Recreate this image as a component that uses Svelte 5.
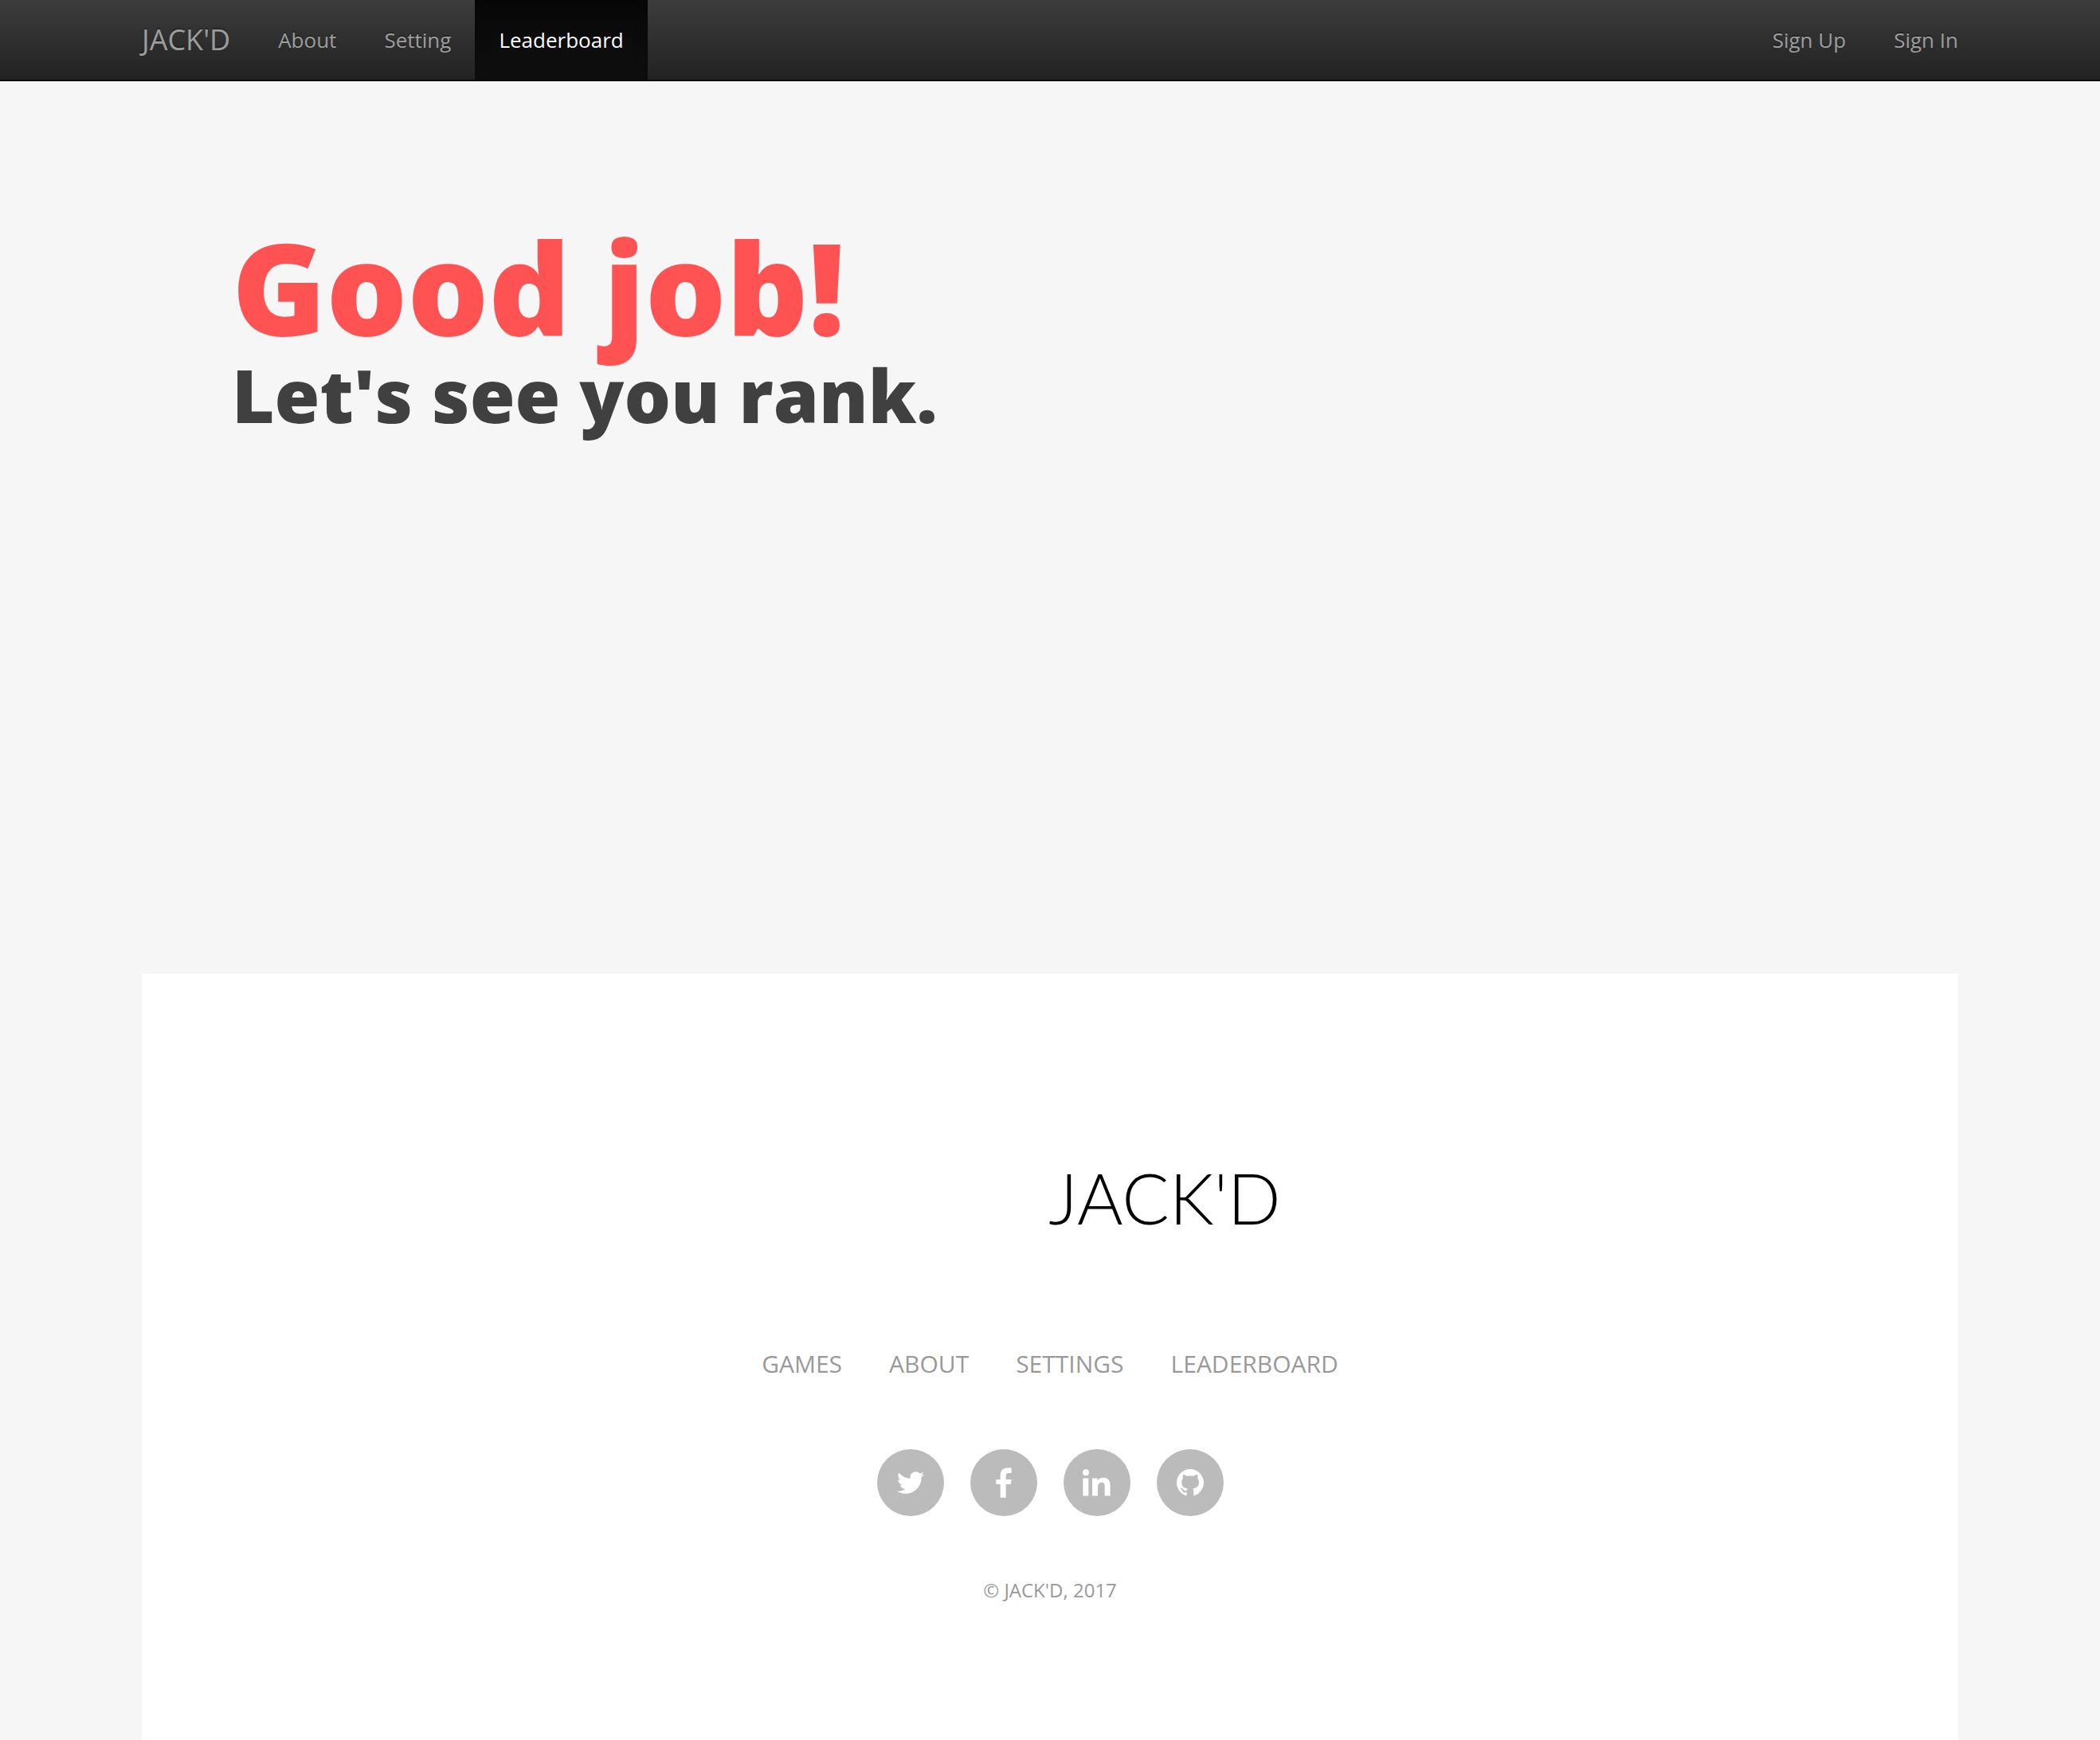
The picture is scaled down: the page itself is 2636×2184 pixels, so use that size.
<script>
  const mainLinks = [
    { label: 'About', href: '#about' },
    { label: 'Setting', href: '#setting' },
    { label: 'Leaderboard', href: '#leaderboard', active: true }
  ];
  const accountLinks = [
    { label: 'Sign Up', href: '#sign-up' },
    { label: 'Sign In', href: '#sign-in' }
  ];
  const footerLinks = ['Games', 'About', 'Settings', 'Leaderboard'];
  const socials = [
    {
      name: 'Twitter', width: 34, height: 28, viewBox: '0 2.2 24 19.6',
      path: 'M23.954 4.569c-.885.389-1.83.654-2.825.775 1.014-.611 1.794-1.574 2.163-2.723-.951.555-2.005.959-3.127 1.184-.896-.959-2.173-1.559-3.591-1.559-2.717 0-4.92 2.203-4.92 4.917 0 .39.045.765.127 1.124C7.691 8.094 4.066 6.13 1.64 3.161c-.427.722-.666 1.561-.666 2.475 0 1.71.87 3.213 2.188 4.096-.807-.026-1.566-.248-2.228-.616v.061c0 2.385 1.693 4.374 3.946 4.827-.413.111-.849.171-1.296.171-.314 0-.615-.03-.916-.086.631 1.953 2.445 3.377 4.604 3.417-1.68 1.319-3.809 2.105-6.102 2.105-.39 0-.779-.023-1.17-.067 2.189 1.394 4.768 2.209 7.557 2.209 9.054 0 13.999-7.496 13.999-13.986 0-.209 0-.42-.015-.63.961-.689 1.8-1.56 2.46-2.548z'
    },
    {
      name: 'Facebook', width: 20, height: 38, viewBox: '0 0 60 114',
      path: 'M17 113V63H1V45h16V33C17 11 27 1 46 1c6 0 10 0 13 1v19H49c-9 0-11 4-11 12v12h21l-3 18H38v50z'
    },
    {
      name: 'LinkedIn', width: 35, height: 34, viewBox: '0 0 105 101',
      path: 'M12 0a12 12 0 1 1 0 24a12 12 0 0 1 0-24zM1 34h21v66H1zM36 34h20v9c5-8 12-11 21-11 21 0 27 13 27 32v36H83V67c0-9-1-17-11-17s-15 7-15 17v33H36z'
    },
    {
      name: 'GitHub', width: 34, height: 34, viewBox: '0 0 16 16',
      path: 'M8 0C3.58 0 0 3.58 0 8c0 3.54 2.29 6.53 5.47 7.59.4.07.55-.17.55-.38 0-.19-.01-.82-.01-1.49-2.01.37-2.53-.49-2.69-.94-.09-.23-.48-.94-.82-1.13-.28-.15-.68-.52-.01-.53.63-.01 1.08.58 1.23.82.72 1.21 1.87.87 2.33.66.07-.52.28-.87.51-1.07-1.78-.2-3.64-.89-3.64-3.95 0-.87.31-1.59.82-2.15-.08-.2-.36-1.02.08-2.12 0 0 .67-.21 2.2.82.64-.18 1.32-.27 2-.27s1.36.09 2 .27c1.53-1.04 2.2-.82 2.2-.82.44 1.1.16 1.92.08 2.12.51.56.82 1.27.82 2.15 0 3.07-1.87 3.75-3.65 3.95.29.25.54.73.54 1.48 0 1.07-.01 1.93-.01 2.2 0 .21.15.46.55.38A8.01 8.01 0 0 0 16 8c0-4.42-3.58-8-8-8z'
    }
  ];
</script>

<div class="page">
  <header class="navbar">
    <nav class="container" aria-label="Main">
      <a class="brand" href="#home">JACK'D</a>
      <ul class="links">
        {#each mainLinks as link}
          <li><a href={link.href} class:active={link.active} aria-current={link.active ? 'page' : undefined}>{link.label}</a></li>
        {/each}
      </ul>
      <ul class="links account">
        {#each accountLinks as link}
          <li><a href={link.href}>{link.label}</a></li>
        {/each}
      </ul>
    </nav>
  </header>

  <main class="container hero">
    <h1>Good job!</h1>
    <h2>Let's see you rank.</h2>
  </main>

  <footer class="container card">
    <div class="logo">JACK'D</div>
    <nav aria-label="Footer">
      <ul class="footer-links">
        {#each footerLinks as label}
          <li><a href={'#' + label.toLowerCase()}>{label}</a></li>
        {/each}
      </ul>
    </nav>
    <ul class="socials">
      {#each socials as s}
        <li>
          <a href={'#' + s.name.toLowerCase()} aria-label={s.name}>
            <svg width={s.width} height={s.height} viewBox={s.viewBox} aria-hidden="true"><path d={s.path} /></svg>
          </a>
        </li>
      {/each}
    </ul>
    <p class="copyright">© JACK'D, 2017</p>
  </footer>
</div>

<style>
  :global(body) {
    background: #f6f6f6;
  }
  .page {
    display: flex;
    flex-direction: column;
    min-height: 100vh;
    font-family: 'Open Sans', sans-serif;
  }
  .container {
    box-sizing: border-box;
    width: 100%;
    max-width: 2280px;
    margin: 0 auto;
  }
  ul {
    display: flex;
    margin: 0;
    padding: 0;
    list-style: none;
  }
  a {
    text-decoration: none;
  }
  .navbar {
    background: linear-gradient(#3c3c3c, #222);
    border-bottom: 2px solid #080808;
  }
  .navbar .container {
    display: flex;
  }
  .navbar a {
    display: block;
    color: #9d9d9d;
    font-size: 26px;
    line-height: 40px;
    padding: 30px;
    text-shadow: 0 -2px 0 rgba(0, 0, 0, 0.25);
  }
  .navbar .brand {
    font-size: 36px;
    padding-left: 0;
  }
  .navbar .active {
    color: #fff;
    background: linear-gradient(#080808, #0f0f0f);
    box-shadow: inset 0 6px 18px rgba(0, 0, 0, 0.25);
  }
  .account {
    margin-left: auto;
  }
  .account li:last-child a {
    padding-right: 0;
  }
  .hero {
    min-height: 1120px;
    padding: 177px 113px 0;
  }
  h1,
  h2 {
    margin: 0;
    font-weight: 800;
  }
  h1 {
    color: #ff5252;
    font-size: 160px;
    line-height: 160px;
  }
  h2 {
    color: #404040;
    font-size: 92px;
    line-height: 114px;
  }
  .card {
    flex: 1;
    display: flex;
    flex-direction: column;
    align-items: center;
    padding: 231px 0 100px;
    background: #fff;
  }
  .logo {
    padding-left: 288px;
    color: #000;
    font-family: Lato, sans-serif;
    font-weight: 300;
    font-size: 88px;
    line-height: 100px;
  }
  .footer-links {
    gap: 59px;
    margin-top: 135px;
  }
  .footer-links a {
    color: #999;
    font-size: 30px;
    line-height: 48px;
    text-transform: uppercase;
  }
  .socials {
    gap: 33px;
    margin-top: 83px;
  }
  .socials a {
    display: flex;
    align-items: center;
    justify-content: center;
    width: 84px;
    height: 84px;
    border-radius: 50%;
    background: #bbb;
  }
  .socials svg {
    fill: #fff;
  }
  .copyright {
    margin: 75px 0 0;
    color: #999;
    font-size: 24px;
    line-height: 36px;
  }
</style>
